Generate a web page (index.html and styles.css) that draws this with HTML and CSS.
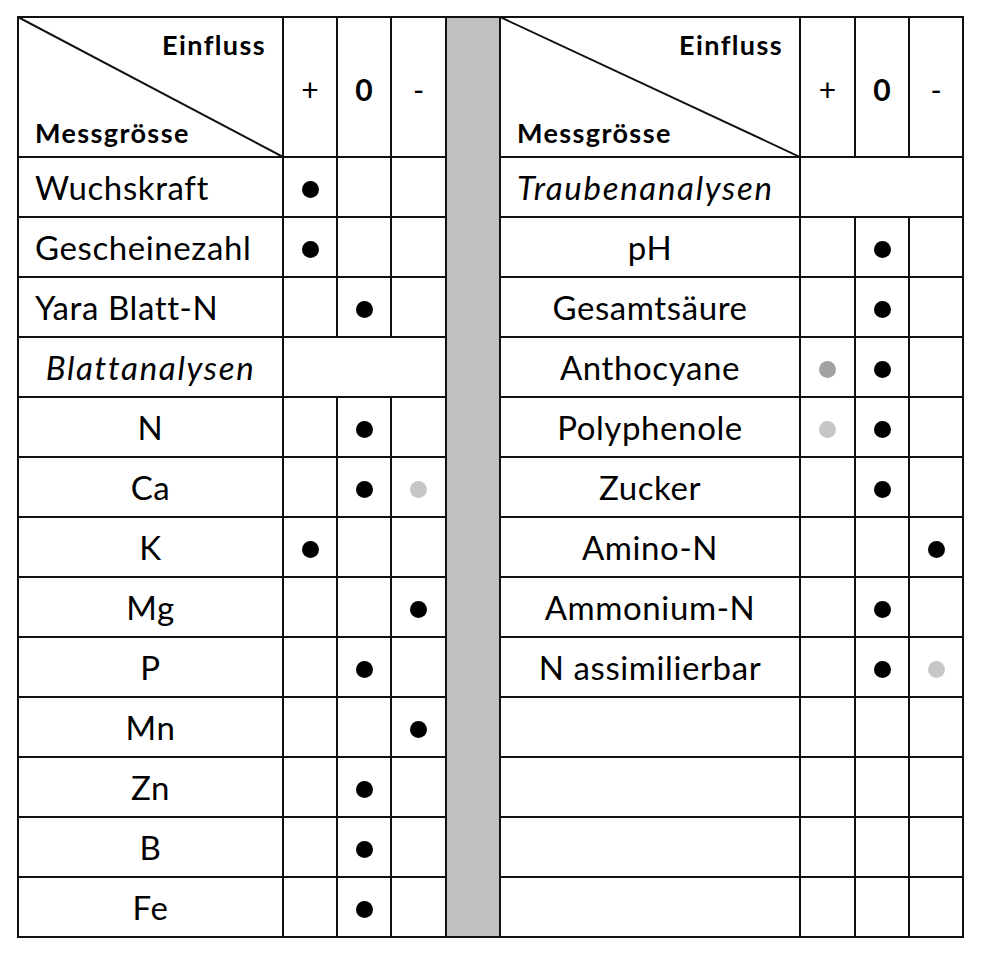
FILE: index.html
```html
<!DOCTYPE html>
<html lang="de">
<head>
<meta charset="utf-8">
<title>Einfluss Messgrösse</title>
<link rel="stylesheet" href="styles.css">
</head>
<body>
<div class="page">
  <div class="sheet">
    <div class="band"></div>

    <div class="c head">
      <svg class="diag" viewBox="0 0 100 100" preserveAspectRatio="none"><line x1="0" y1="0" x2="100" y2="100" vector-effect="non-scaling-stroke"/></svg>
      <span class="h-top">Einfluss</span>
      <span class="h-bot">Messgrösse</span>
    </div>
    <div class="c sym">+</div><div class="c sym bold">0</div><div class="c sym">-</div>
    <div class="c head">
      <svg class="diag" viewBox="0 0 100 100" preserveAspectRatio="none"><line x1="0" y1="0" x2="100" y2="100" vector-effect="non-scaling-stroke"/></svg>
      <span class="h-top">Einfluss</span>
      <span class="h-bot">Messgrösse</span>
    </div>
    <div class="c sym">+</div><div class="c sym bold">0</div><div class="c sym">-</div>

    <div class="c lbl">Wuchskraft</div><div class="c"><i class="dot"></i></div><div class="c"></div><div class="c"></div>
    <div class="c lbl it">Traubenanalysen</div><div class="c span3"></div>

    <div class="c lbl">Gescheinezahl</div><div class="c"><i class="dot"></i></div><div class="c"></div><div class="c"></div>
    <div class="c ctr">pH</div><div class="c"></div><div class="c"><i class="dot"></i></div><div class="c"></div>

    <div class="c lbl">Yara Blatt-N</div><div class="c"></div><div class="c"><i class="dot"></i></div><div class="c"></div>
    <div class="c ctr">Gesamtsäure</div><div class="c"></div><div class="c"><i class="dot"></i></div><div class="c"></div>

    <div class="c ctr it">Blattanalysen</div><div class="c span3"></div>
    <div class="c ctr">Anthocyane</div><div class="c"><i class="dot g1"></i></div><div class="c"><i class="dot"></i></div><div class="c"></div>

    <div class="c ctr">N</div><div class="c"></div><div class="c"><i class="dot"></i></div><div class="c"></div>
    <div class="c ctr">Polyphenole</div><div class="c"><i class="dot g2"></i></div><div class="c"><i class="dot"></i></div><div class="c"></div>

    <div class="c ctr">Ca</div><div class="c"></div><div class="c"><i class="dot"></i></div><div class="c"><i class="dot g2"></i></div>
    <div class="c ctr">Zucker</div><div class="c"></div><div class="c"><i class="dot"></i></div><div class="c"></div>

    <div class="c ctr">K</div><div class="c"><i class="dot"></i></div><div class="c"></div><div class="c"></div>
    <div class="c ctr">Amino-N</div><div class="c"></div><div class="c"></div><div class="c"><i class="dot"></i></div>

    <div class="c ctr">Mg</div><div class="c"></div><div class="c"></div><div class="c"><i class="dot"></i></div>
    <div class="c ctr">Ammonium-N</div><div class="c"></div><div class="c"><i class="dot"></i></div><div class="c"></div>

    <div class="c ctr">P</div><div class="c"></div><div class="c"><i class="dot"></i></div><div class="c"></div>
    <div class="c ctr">N assimilierbar</div><div class="c"></div><div class="c"><i class="dot"></i></div><div class="c"><i class="dot g2"></i></div>

    <div class="c ctr">Mn</div><div class="c"></div><div class="c"></div><div class="c"><i class="dot"></i></div>
    <div class="c"></div><div class="c"></div><div class="c"></div><div class="c"></div>

    <div class="c ctr">Zn</div><div class="c"></div><div class="c"><i class="dot"></i></div><div class="c"></div>
    <div class="c"></div><div class="c"></div><div class="c"></div><div class="c"></div>

    <div class="c ctr">B</div><div class="c"></div><div class="c"><i class="dot"></i></div><div class="c"></div>
    <div class="c"></div><div class="c"></div><div class="c"></div><div class="c"></div>

    <div class="c ctr">Fe</div><div class="c"></div><div class="c"><i class="dot"></i></div><div class="c"></div>
    <div class="c"></div><div class="c"></div><div class="c"></div><div class="c"></div>
  </div>
</div>
</body>
</html>
```

FILE: styles.css
```css
html, body {
  margin: 0;
  padding: 0;
  background: #ffffff;
}

.page {
  padding: 16px 0 0 17px;
  font-family: Lato, "Noto Sans", sans-serif;
  color: #000;
}

.sheet {
  display: grid;
  grid-template-columns: 263px 52px 52px 53px 52px 298px 53px 52px 52px;
  grid-template-rows: 138px repeat(13, 58px);
  gap: 2px;
  padding: 2px;
  background: #111;
  width: max-content;
}

.band {
  grid-column: 5;
  grid-row: 1 / span 14;
  background: #c0c0c0;
}

.c {
  background: #fff;
  display: flex;
  align-items: center;
  justify-content: center;
  font-size: 33px;
  letter-spacing: 0.6px;
  line-height: 1;
  white-space: nowrap;
}

.span3 {
  grid-column: span 3;
}

.lbl {
  justify-content: flex-start;
  padding-left: 16px;
}

.ctr {
  justify-content: center;
}

.it {
  font-style: italic;
  letter-spacing: 1.7px;
}

.head {
  position: relative;
  flex-direction: column;
  align-items: stretch;
  justify-content: space-between;
  padding: 13px 16px 10px 16px;
  font-weight: 700;
  font-size: 27px;
  letter-spacing: 1.4px;
}

.h-top {
  text-align: right;
}

.h-bot {
  text-align: left;
}

.diag {
  position: absolute;
  left: -1px;
  top: -1px;
  width: calc(100% + 2px);
  height: calc(100% + 2px);
}

.diag line {
  stroke: #111;
  stroke-width: 2;
}

.sym {
  font-size: 30px;
  letter-spacing: 0;
  padding-top: 4px;
}

.bold {
  font-weight: 700;
}

.dot {
  display: block;
  width: 17px;
  height: 17px;
  border-radius: 50%;
  background: #000;
  margin-top: 4px;
}

.dot.g1 {
  background: #a2a2a2;
}

.dot.g2 {
  background: #c6c6c6;
}
```
